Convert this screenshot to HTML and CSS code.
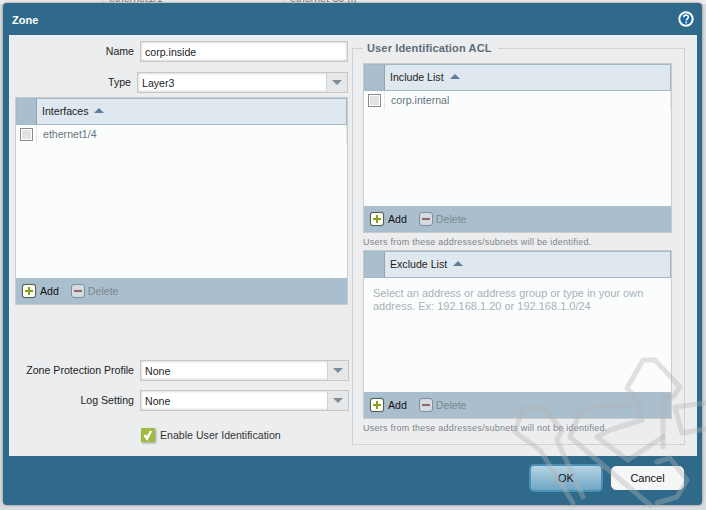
FILE: index.html
```html
<!DOCTYPE html>
<html>
    <head>
        <title>Zone</title>
        <link rel="stylesheet" href="styles.css">
    </head>
    <body>
        <div class="backdrop">
            <span class="bgText bgOne">ethernet1/1</span>
            <span class="bgText bgTwo">ethernet-55 (l)</span>
        </div>
        <div class="dialog">
            <div class="titleBar">
                <span class="title">Zone</span>
                <svg class="helpIcon" width="16" height="16" viewBox="0 0 16 16">
                    <circle cx="8" cy="8" r="6.700" fill="#1a69a2" stroke="#fff" stroke-width="2"/>
                    <path d="M5.800 6.300c0-3 4.600-3 4.600-.2 0 1.700-2.200 1.700-2.200 3.400" fill="none" stroke="#fff" stroke-width="1.600"/>
                    <rect x="7.400" y="10.600" width="1.700" height="1.700" fill="#fff"/>
                </svg>
            </div>
            <div class="body">
                <div class="leftCol">
                    <div class="row rowName">
                        <label class="lbl lblName">Name</label>
                        <div class="field nameField">corp.inside</div>
                    </div>
                    <div class="row rowType">
                        <label class="lbl lblType">Type</label>
                        <div class="field selectField typeField">
                            <span class="selectText">Layer3</span>
                            <span class="arrowBox"><i class="arrow"></i></span>
                        </div>
                    </div>
                    <div class="grid ifGrid">
                        <div class="gridHead"><span class="headCheck"></span><span class="headText">Interfaces <i class="sortUp"></i></span></div>
                        <div class="gridRow"><span class="rowCheck"><i class="chk"></i></span><span class="rowText">ethernet1/4</span></div>
                        <div class="gridSpace"></div>
                        <div class="gridFoot">
                            <span class="btnIcon addIcon"><i></i></span><span class="footAdd">Add</span>
                            <span class="btnIcon delIcon"><i></i></span><span class="footDel">Delete</span>
                        </div>
                    </div>
                    <div class="row rowProfile">
                        <label class="lbl lblLong">Zone Protection Profile</label>
                        <div class="field selectField wideSelect">
                            <span class="selectText">None</span>
                            <span class="arrowBox"><i class="arrow"></i></span>
                        </div>
                    </div>
                    <div class="row rowLog">
                        <label class="lbl lblLong">Log Setting</label>
                        <div class="field selectField wideSelect">
                            <span class="selectText">None</span>
                            <span class="arrowBox"><i class="arrow"></i></span>
                        </div>
                    </div>
                    <div class="row rowEnable">
                        <svg class="greenCheck" width="16" height="16" viewBox="0 0 16 16">
                            <rect x="1" y="1" width="14" height="14" fill="#9dbb3c"/>
                            <path d="M4.500 8l2.500 3.500 4-7.500" fill="none" stroke="#fff" stroke-width="2.600"/>
                        </svg>
                        <span class="enableText">Enable User Identification</span>
                    </div>
                </div>
                <fieldset class="rightCol">
                    <legend>User Identification ACL</legend>
                    <div class="grid incGrid">
                        <div class="gridHead"><span class="headCheck"></span><span class="headText">Include List <i class="sortUp"></i></span></div>
                        <div class="gridRow"><span class="rowCheck"><i class="chk"></i></span><span class="rowText">corp.internal</span></div>
                        <div class="gridSpace"></div>
                        <div class="gridFoot">
                            <span class="btnIcon addIcon"><i></i></span><span class="footAdd">Add</span>
                            <span class="btnIcon delIcon"><i></i></span><span class="footDel">Delete</span>
                        </div>
                    </div>
                    <div class="hint">Users from these addresses/subnets will be identified.</div>
                    <div class="grid excGrid">
                        <div class="gridHead"><span class="headCheck"></span><span class="headText">Exclude List <i class="sortUp"></i></span></div>
                        <div class="emptyText">Select an address or address group or type in your own address. Ex: 192.168.1.20 or 192.168.1.0/24</div>
                        <div class="gridFoot">
                            <span class="btnIcon addIcon"><i></i></span><span class="footAdd">Add</span>
                            <span class="btnIcon delIcon"><i></i></span><span class="footDel">Delete</span>
                        </div>
                    </div>
                    <div class="hint">Users from these addresses/subnets will not be identified.</div>
                </fieldset>
            </div>
            <div class="buttonBar">
                <button class="btnOk">OK</button>
                <button class="btnCancel">Cancel</button>
            </div>
        </div>
        <svg class="watermark" width="706" height="510" viewBox="0 0 706 510">
            <g fill="none" stroke="#b4b4b4" stroke-opacity="0.38" stroke-width="5" stroke-linejoin="round" stroke-linecap="round">
                <path d="M663 447V397H673L680 387L655 360H643L627 388L640 403"/>
                <path d="M650 505L570 437L580 412L600 405H637L642 420L610 430L597 437L628 460L663 437"/>
                <path d="M583 497L557 440L562 430L543 408H523L515 432L540 450L573 503"/>
                <path d="M706 403L675 407L682 433L706 429"/>
                <path d="M657 462L670 458L687 480L677 497L657 503"/>
            </g>
        </svg>
    </body>
</html>
```

FILE: styles.css
```css
html, body {
    margin: 0;
    height: 510px;
    overflow: hidden;
}
body {
    width: 706px;
    background-color: #d9dce0;
    font-family: "Liberation Sans", Arial, sans-serif;
    font-size: 10.6px;
    color: #222;
    position: relative;
}
.backdrop {
    position: absolute;
    top: 0;
    left: 0;
    right: 0;
    height: 4px;
    overflow: hidden;
    background-color: #eee;
}
.bgText {
    position: absolute;
    top: -8px;
    padding-left: 6px;
    height: 20px;
    border-left: 1px solid #ccc;
    color: #777;
}
.bgOne { left: 102px; }
.bgTwo { left: 283px; }

.dialog {
    position: absolute;
    left: 3px;
    top: 3px;
    width: 699px;
    height: 502px;
    background-color: #306a8a;
    border-radius: 4px;
    box-shadow: 0 0 3px #777;
    display: flex;
    flex-direction: column;
}
.titleBar {
    height: 32px;
    display: flex;
    align-items: center;
    justify-content: space-between;
    padding: 0 8px 0 9px;
    flex: none;
}
.title {
    color: #fff;
    font-weight: bold;
    font-size: 11px;
    margin-top: 1px;
}
.helpIcon { margin-top: -1px; }
.body {
    flex: none;
    height: 421px;
    margin: 0 5px 0 6px;
    background-color: #ecedef;
    display: flex;
}
.leftCol {
    width: 340px;
    flex: none;
}
.row {
    display: flex;
    align-items: center;
}
.lbl {
    width: 125px;
    text-align: right;
    flex: none;
}
.field {
    height: 21px;
    box-sizing: border-box;
    background-color: #fff;
    border: 1px solid #c6c8c8;
    box-shadow: inset 0 0 3px #bbb;
    display: flex;
    align-items: center;
    color: #222;
}
.rowName { margin-top: 6px; }
.lblName { margin-right: 6px; margin-top: -2px; }
.nameField {
    width: 208px;
    padding-left: 4px;
}
.rowType { margin-top: 10px; }
.lblType { margin-right: 6px; width: 122px; margin-top: -2px; }
.typeField { width: 211px; }
.selectField { position: relative; padding-left: 4px; }
.selectText { flex: 1; }
.arrowBox {
    width: 20px;
    height: 19px;
    background-color: #e6e7e8;
    border-left: 1px solid #cfd1d2;
    display: flex;
    align-items: center;
    justify-content: center;
    flex: none;
}
.arrow {
    width: 0;
    height: 0;
    border-left: 5px solid transparent;
    border-right: 5px solid transparent;
    border-top: 5px solid #7d8e9a;
}
.grid {
    box-sizing: border-box;
    background-color: #fbfdfd;
    border: 1px solid #c9cbcc;
    display: flex;
    flex-direction: column;
}
.ifGrid {
    width: 333px;
    height: 208px;
    margin: 4px 0 0 6px;
}
.gridHead {
    height: 27px;
    box-sizing: border-box;
    display: flex;
    background-color: #dfe8ee;
    border: 1px solid #a2b8c7;
    flex: none;
    color: #222;
}
.headCheck {
    width: 19px;
    background-color: #a9bfce;
    border-right: 1px solid #8fa5b4;
    flex: none;
}
.headText {
    padding-left: 5px;
    line-height: 25px;
    white-space: nowrap;
}
.sortUp {
    display: inline-block;
    width: 0;
    height: 0;
    margin: 0 0 2px 3px;
    border-left: 5px solid transparent;
    border-right: 5px solid transparent;
    border-bottom: 5px solid #5d7e9a;
}
.gridRow {
    height: 19px;
    display: flex;
    flex: none;
    border-right: 1px solid #e6e8e8;
    color: #66757f;
}
.rowCheck {
    width: 21px;
    flex: none;
    border-right: 1px solid #e6e8e8;
    display: flex;
    align-items: center;
    padding-left: 4px;
    box-sizing: border-box;
}
.chk {
    width: 11px;
    height: 11px;
    border: 1px solid #8c8c8c;
    background-color: #e3e3e3;
    box-shadow: inset 0 0 0 1px #fff;
}
.rowText {
    padding-left: 6px;
    line-height: 19px;
}
.gridSpace { flex: 1; }
.gridFoot {
    height: 26px;
    background-color: #aabfce;
    display: flex;
    align-items: center;
    padding-left: 6px;
    flex: none;
}
.btnIcon {
    width: 12px;
    height: 12px;
    border: 1px solid #4f6155;
    border-radius: 3px;
    background-color: #fdfdf5;
    box-shadow: 0 0 1px #5f7066;
    position: relative;
    flex: none;
}
.addIcon i, .delIcon i {
    position: absolute;
    left: 2px;
    top: 5px;
    width: 8px;
    height: 2px;
    background-color: #8aa01f;
}
.addIcon i::after {
    content: "";
    position: absolute;
    left: 3px;
    top: -3px;
    width: 2px;
    height: 8px;
    background-color: #8aa01f;
}
.delIcon {
    margin-left: 12px;
    background-color: #d4dbe0;
    border-color: #7d8e9a;
    box-shadow: none;
}
.delIcon i {
    background-color: #94655a;
}
.footAdd { margin-left: 4px; color: #111; }
.footDel { margin-left: 3px; color: #7a8790; }

.rowProfile { margin-top: 55px; }
.lblLong { margin-right: 6px; margin-top: -2px; }
.wideSelect { width: 209px; }
.rowLog { margin-top: 9px; }
.rowEnable { margin-top: 16px; padding-left: 131px; }
.greenCheck { filter: drop-shadow(1px 1px 1px #999); }
.enableText { margin-left: 4px; color: #333; }

.rightCol {
    box-sizing: border-box;
    width: 333px;
    height: 403px;
    margin: 7px 0 0 3px;
    padding: 0 0 0 10px;
    border: 1px solid #cfd1d2;
    min-width: 0;
    flex: none;
}
.rightCol legend {
    padding: 0 6px 0 4px;
    font-weight: bold;
    color: #5d6d78;
    font-size: 11px;
    letter-spacing: 0.15px;
}
.incGrid {
    width: 309px;
    height: 170px;
    margin-top: 9px;
}
.excGrid {
    width: 309px;
    height: 169px;
}
.hint {
    height: 14px;
    line-height: 13px;
    margin-top: 3px;
    font-size: 9px;
    letter-spacing: 0.25px;
    color: #7f8488;
    white-space: nowrap;
}
.emptyText {
    flex: 1;
    padding: 9px 8px 0 9px;
    font-size: 11px;
    line-height: 13px;
    color: #a7b2bb;
}
.buttonBar {
    flex: 1;
    display: flex;
    justify-content: flex-end;
    align-items: flex-start;
    gap: 8px;
    padding: 10px 18px 0 0;
}
.btnOk, .btnCancel {
    font-family: "Liberation Sans", Arial, sans-serif;
    font-size: 11px;
    height: 24px;
    box-sizing: border-box;
    border-radius: 5px;
    color: #111;
    padding: 0;
}
.btnOk {
    width: 74px;
    height: 28px;
    margin-top: -2px;
    border: 2px solid #4a8fb5;
    background: linear-gradient(#b6d3e2, #6fa6c4);
}
.btnCancel {
    width: 73px;
    border: 1px solid #f6f6f6;
    background-color: #f6f6f6;
}
.watermark {
    position: absolute;
    left: 0;
    top: 0;
    pointer-events: none;
}
```
